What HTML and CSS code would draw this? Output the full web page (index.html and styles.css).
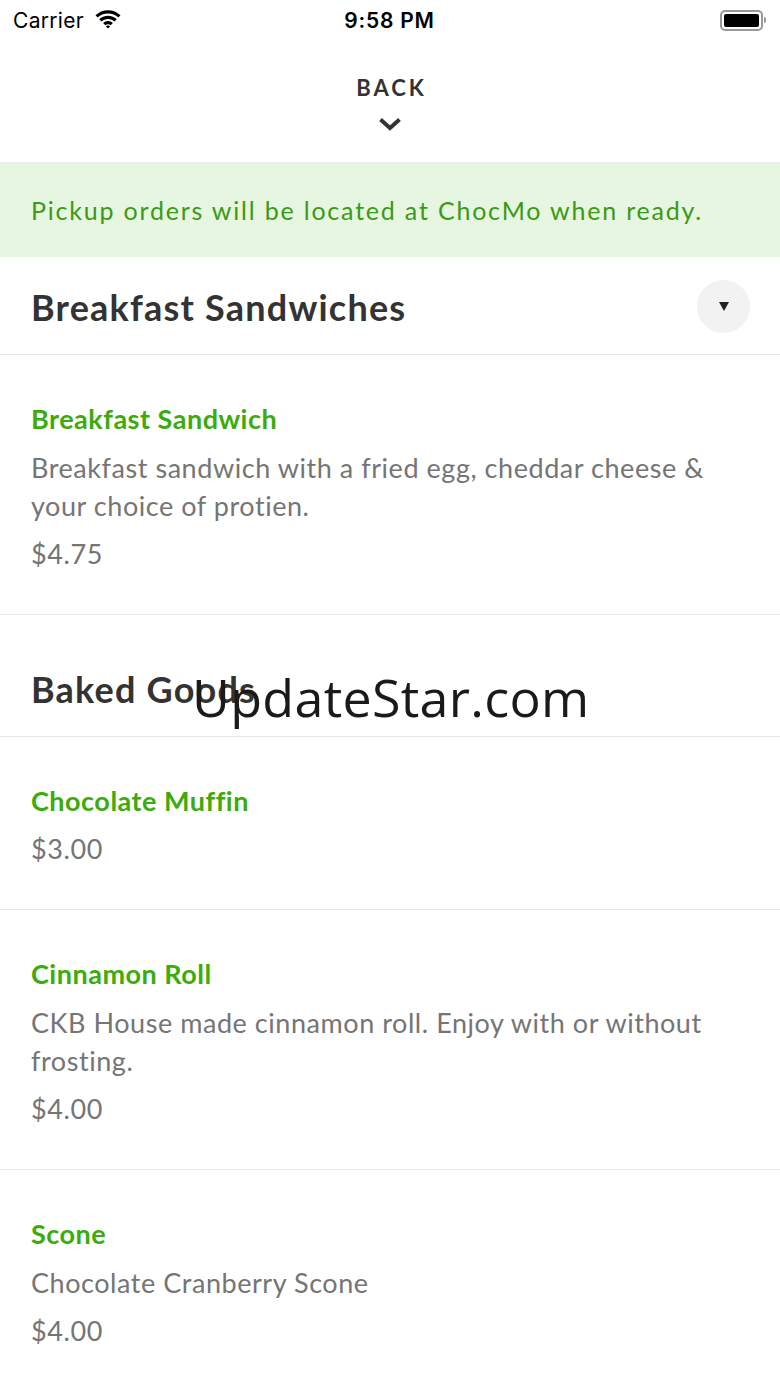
FILE: index.html
```html
<!DOCTYPE html>
<html>
<head>
    <title>Menu</title>
    <link rel="stylesheet" href="styles.css">
</head>
<body>
    <div class="screen">
        <div class="status-bar">
            <div class="carrier">
                Carrier
                <svg class="wifi" width="28" height="20" viewBox="0 0 28 20">
                    <path d="M14 4.5c4 0 7.6 1.5 10.3 4l2.2-2.3C23.2 3.1 18.8 1.2 14 1.2S4.8 3.1 1.5 6.2l2.2 2.3C6.4 6 10 4.5 14 4.5z" fill="#000"/>
                    <path d="M14 10c2.5 0 4.8 1 6.5 2.5l2.3-2.3C20.5 8 17.4 6.7 14 6.7S7.5 8 5.2 10.2l2.3 2.3C9.2 11 11.5 10 14 10z" fill="#000"/>
                    <path d="M14 15.3c1 0 1.9.4 2.6 1L18.9 14c-1.3-1.2-3-2-4.9-2s-3.6.8-4.9 2l2.3 2.3c.7-.6 1.6-1 2.6-1z" fill="#000"/>
                    <path d="M11.9 17.4L14 19.6l2.1-2.2c-.6-.5-1.3-.8-2.1-.8s-1.5.3-2.1.8z" fill="#000"/>
                </svg>
            </div>
            <div class="time">9:58 PM</div>
            <div class="battery">
                <div class="battery-body"><div class="battery-fill"></div></div>
                <div class="battery-nub"></div>
            </div>
        </div>

        <div class="back">
            <div class="back-label">BACK</div>
            <svg class="chevron" width="24" height="14" viewBox="0 0 24 14">
                <path d="M2.5 2.5L12 11l9.5-8.5" fill="none" stroke="#333" stroke-width="4"/>
            </svg>
        </div>

        <div class="notice">Pickup orders will be located at ChocMo when ready.</div>

        <div class="section">
            <div class="section-header">
                <h2>Breakfast Sandwiches</h2>
                <div class="toggle"><span class="triangle"></span></div>
            </div>
            <div class="item">
                <div class="item-name">Breakfast Sandwich</div>
                <div class="item-desc">Breakfast sandwich with a fried egg, cheddar cheese &amp; your choice of protien.</div>
                <div class="item-price">$4.75</div>
            </div>
        </div>

        <div class="section spaced">
            <div class="section-header">
                <h2>Baked Goods</h2>
            </div>
            <div class="item">
                <div class="item-name">Chocolate Muffin</div>
                <div class="item-price">$3.00</div>
            </div>
            <div class="item">
                <div class="item-name">Cinnamon Roll</div>
                <div class="item-desc">CKB House made cinnamon roll. Enjoy with or without frosting.</div>
                <div class="item-price">$4.00</div>
            </div>
            <div class="item last">
                <div class="item-name">Scone</div>
                <div class="item-desc">Chocolate Cranberry Scone</div>
                <div class="item-price">$4.00</div>
            </div>
        </div>

        <div class="watermark">UpdateStar.com</div>
    </div>
</body>
</html>
```

FILE: styles.css
```css
body {
    margin: 0;
    background: #fff;
    font-family: Lato, "Open Sans", sans-serif;
    color: #333;
}

.screen {
    position: relative;
    width: 780px;
    min-height: 1387px;
    overflow: hidden;
}

/* status bar */
.status-bar {
    height: 40px;
    display: flex;
    align-items: center;
    justify-content: space-between;
    padding: 0 14px 0 13px;
    font-family: Inter, Roboto, sans-serif;
    color: #000;
}

.carrier {
    display: flex;
    align-items: center;
    gap: 10px;
    width: 160px;
    font-size: 21px;
    letter-spacing: 0.3px;
}

.wifi {
    margin-top: -3px;
}

.time {
    font-size: 21px;
    font-weight: 600;
    letter-spacing: 0.8px;
}

.battery {
    width: 160px;
    display: flex;
    justify-content: flex-end;
    align-items: center;
}

.battery-body {
    border: 2px solid #999;
    border-radius: 5px;
    padding: 2px;
    width: 35px;
    height: 13px;
}

.battery-fill {
    width: 100%;
    height: 100%;
    background: #000;
    border-radius: 2px;
}

.battery-nub {
    width: 2px;
    height: 6px;
    background: #999;
    border-radius: 0 2px 2px 0;
    margin-left: 1px;
}

/* back */
.back {
    height: 122px;
    display: flex;
    flex-direction: column;
    align-items: center;
    border-bottom: 1px solid #ececec;
}

.back-label {
    margin-top: 34px;
    font-size: 22px;
    font-weight: bold;
    letter-spacing: 3px;
    padding-left: 3px;
    color: #333;
    line-height: 28px;
}

.chevron {
    margin-top: 15px;
}

.notice {
    background: #e6f6e1;
    color: #3a9a14;
    font-size: 25px;
    letter-spacing: 1.8px;
    padding: 0 31px;
    height: 94px;
    display: flex;
    align-items: center;
}

/* sections */
.section.spaced {
    margin-top: 24px;
}

.section-header {
    display: flex;
    align-items: center;
    justify-content: space-between;
    padding: 2px 30px 0 31px;
    height: 95px;
    border-bottom: 1px solid #e8e8e8;
}

.section-header h2 {
    margin: 0;
    font-size: 36px;
    font-weight: bold;
    letter-spacing: 1.2px;
    color: #333;
}

.toggle {
    width: 53px;
    height: 53px;
    border-radius: 50%;
    background: #f2f2f2;
    display: flex;
    align-items: center;
    justify-content: center;
}

.triangle {
    width: 0;
    height: 0;
    border-left: 5px solid transparent;
    border-right: 5px solid transparent;
    border-top: 9px solid #222;
}

.item {
    padding: 45px 31px 41px;
    border-bottom: 1px solid #e8e8e8;
}

.item.last {
    border-bottom: none;
}

.item-name {
    font-size: 27px;
    font-weight: bold;
    letter-spacing: 0.5px;
    color: #3cab0c;
    line-height: 38px;
}

.item-desc {
    margin-top: 11px;
    font-size: 27px;
    letter-spacing: 0.55px;
    line-height: 38px;
    color: #757575;
}

.item-price {
    margin-top: 10px;
    font-size: 27px;
    letter-spacing: 0.6px;
    line-height: 38px;
    color: #757575;
}

.watermark {
    position: absolute;
    left: 192px;
    top: 662px;
    font-family: "Open Sans", sans-serif;
    font-size: 52px;
    letter-spacing: 0.3px;
    line-height: 70px;
    color: #1a1a1a;
}
```
